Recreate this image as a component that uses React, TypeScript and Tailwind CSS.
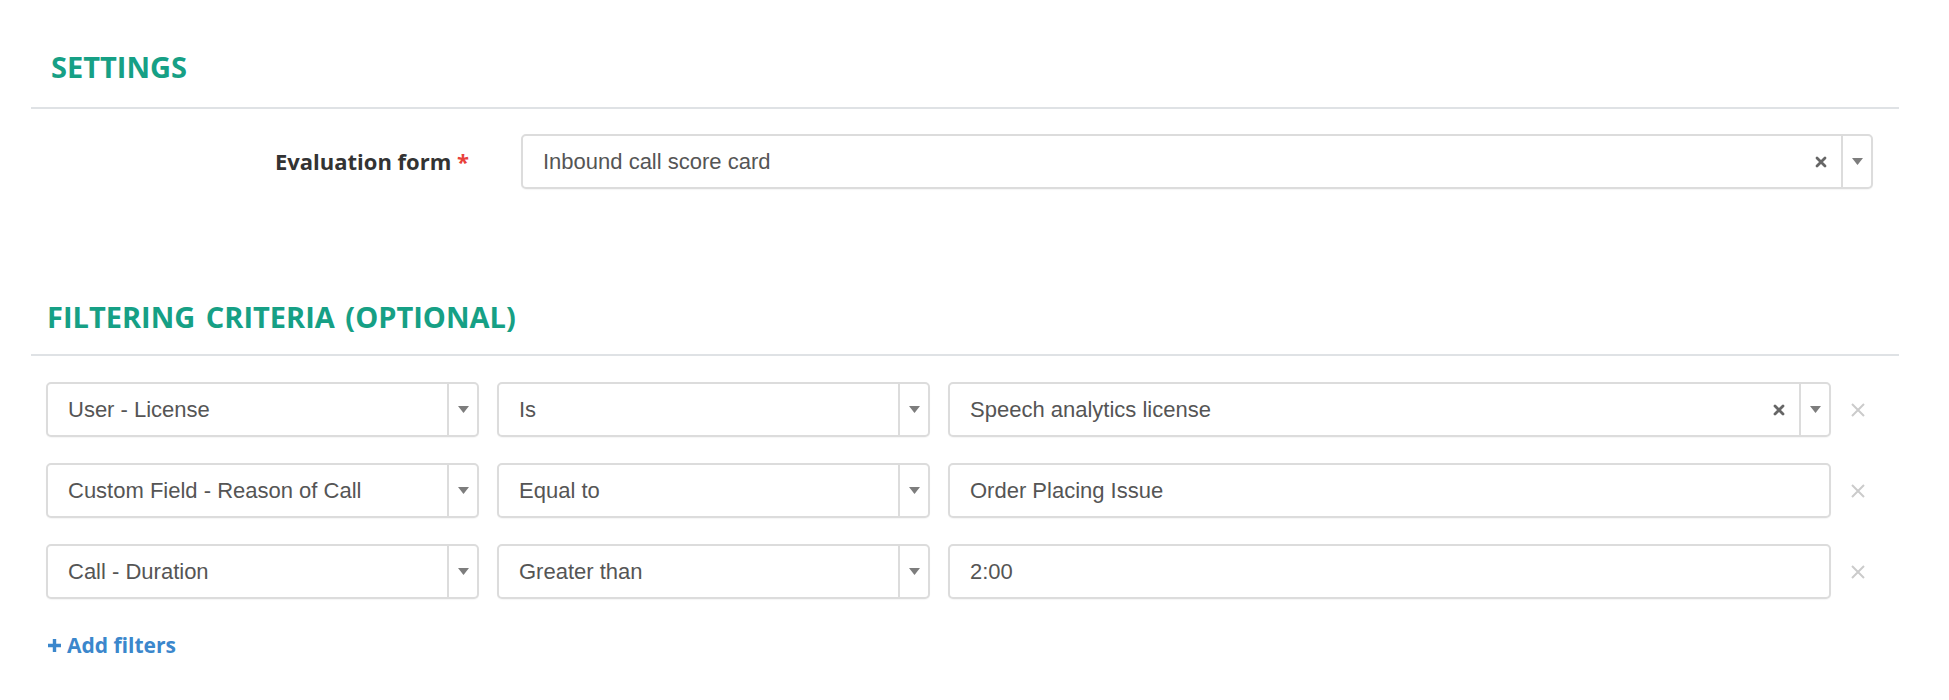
import React from "react";

type Filter = {
  field: string;
  operator: string;
  value: string;
  valueIsSelect?: boolean;
};

const FILTERS: Filter[] = [
  { field: "User - License", operator: "Is", value: "Speech analytics license", valueIsSelect: true },
  { field: "Custom Field - Reason of Call", operator: "Equal to", value: "Order Placing Issue" },
  { field: "Call - Duration", operator: "Greater than", value: "2:00" },
];

const Caret = () => (
  <svg width="11" height="7" viewBox="0 0 11 7" className="text-[#7d7d7d]">
    <path d="M0 0h11L5.5 7z" fill="currentColor" />
  </svg>
);

const ClearX = () => (
  <svg width="12" height="12" viewBox="0 0 12 12" className="text-[#666]">
    <path d="M2 2l8 8M10 2l-8 8" stroke="currentColor" strokeWidth="2.8" strokeLinecap="round" />
  </svg>
);

const RemoveX = () => (
  <svg width="16" height="16" viewBox="0 0 16 16" className="text-[#cbcbcb]">
    <path d="M2 2l12 12M14 2L2 14" stroke="currentColor" strokeWidth="2" />
  </svg>
);

interface SelectBoxProps {
  value: string;
  clearable?: boolean;
  className?: string;
}

const SelectBox: React.FC<SelectBoxProps> = ({ value, clearable, className = "" }) => (
  <div
    className={`flex h-[55px] items-stretch rounded-[5px] border-2 border-[#dcdcdc] bg-white shadow-[0_1px_1px_rgba(0,0,0,0.04)] ${className}`}
  >
    <div className="flex min-w-0 flex-1 items-center pl-[20px] text-[22px] text-[#555] font-['Liberation_Sans',Arial,sans-serif]">
      <span className="truncate">{value}</span>
    </div>
    {clearable && (
      <div className="flex w-[40px] items-center justify-center">
        <ClearX />
      </div>
    )}
    <div className="flex w-[30px] items-center justify-center border-l-2 border-[#dcdcdc]">
      <Caret />
    </div>
  </div>
);

const TextBox: React.FC<{ value: string; className?: string }> = ({ value, className = "" }) => (
  <div
    className={`flex h-[55px] items-center rounded-[5px] border-2 border-[#dcdcdc] bg-white pl-[20px] text-[22px] text-[#555] shadow-[0_1px_1px_rgba(0,0,0,0.04)] font-['Liberation_Sans',Arial,sans-serif] ${className}`}
  >
    {value}
  </div>
);

export default function App() {
  return (
    <div className="h-[700px] w-full bg-white pl-[31px] pr-[50px] pt-[52px] font-['Open_Sans',sans-serif]">
      {/* Settings */}
      <div className="border-b-2 border-[#dfe2e5] pb-[26px] pl-[20px]">
        <h2 className="text-[29px] font-bold leading-none text-[#16a085]">SETTINGS</h2>
      </div>

      <div className="mt-[25px] flex items-center pr-[26px]">
        <label className="w-[438px] text-right text-[22px] font-bold text-[#333]">
          Evaluation form <span className="text-[#e8413a]">*</span>
        </label>
        <SelectBox value="Inbound call score card" clearable className="ml-[52px] flex-1" />
      </div>

      {/* Filtering criteria */}
      <div className="mt-[113px] border-b-2 border-[#dfe2e5] pb-[23px] pl-[16px]">
        <h2 className="text-[29px] font-bold leading-none text-[#16a085] [word-spacing:3px]">
          FILTERING CRITERIA (OPTIONAL)
        </h2>
      </div>

      <div className="mt-[26px] flex flex-col gap-[26px] pl-[15px] pr-[14px]">
        {FILTERS.map((f) => (
          <div key={f.field} className="flex items-center gap-[18px]">
            <SelectBox value={f.field} className="w-[433px]" />
            <SelectBox value={f.operator} className="w-[433px]" />
            {f.valueIsSelect ? (
              <SelectBox value={f.value} clearable className="flex-1" />
            ) : (
              <TextBox value={f.value} className="flex-1" />
            )}
            <button className="-ml-[18px] flex w-[54px] items-center justify-center">
              <RemoveX />
            </button>
          </div>
        ))}
      </div>

      <a className="mt-[34px] ml-[16px] flex items-center gap-[5px] text-[21px] font-bold leading-6 text-[#3b87cc]">
        <svg width="15" height="15" viewBox="0 0 15 15">
          <path d="M7.5 1v13M1 7.5h13" stroke="currentColor" strokeWidth="3.4" />
        </svg>
        Add filters
      </a>
    </div>
  );
}
